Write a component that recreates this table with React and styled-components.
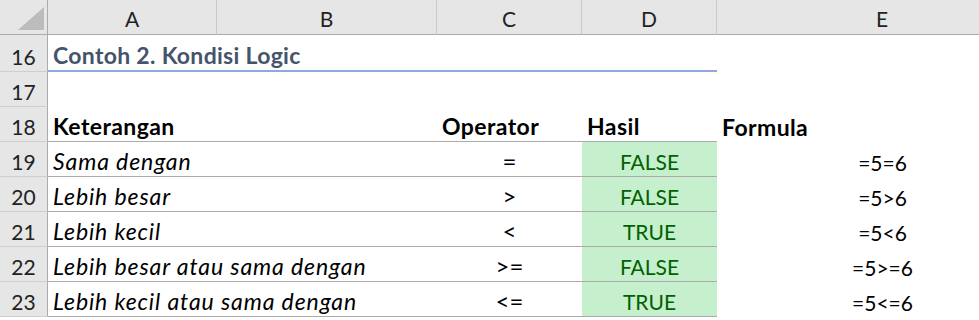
import React from "react";
import styled, { createGlobalStyle } from "styled-components";

const GlobalStyle = createGlobalStyle`
	html, body {
		margin: 0;
		padding: 0;
		background: #ffffff;
		overflow: hidden;
	}
	body {
		font-family: "Lato", "Liberation Sans", sans-serif;
	}
`;

const COLS = "48px 169px 220px 145px 135px 331px";

const Sheet = styled.div`
	display: flex;
	flex-direction: column;
	width: 1048px;
	font-size: 21px;
	color: #000000;
`;

const Row = styled.div`
	display: grid;
	grid-template-columns: ${COLS};
	height: ${({ $h }) => $h}px;
`;

const Corner = styled.div`
	box-sizing: border-box;
	background: #e6e6e6;
	border-right: 1px solid #ababab;
	border-bottom: 1px solid #ababab;
	svg {
		display: block;
	}
`;

const ColHead = styled.div`
	box-sizing: border-box;
	background: #e6e6e6;
	border-right: 1px solid #c9c9c9;
	border-bottom: 1px solid #ababab;
	display: flex;
	align-items: flex-end;
	justify-content: center;
	padding-bottom: 3px;
	color: #222222;
	line-height: 1.2;
`;

const RowHead = styled.div`
	box-sizing: border-box;
	background: #e6e6e6;
	border-right: 1px solid #ababab;
	border-bottom: 1px solid #cfcfcf;
	display: flex;
	align-items: flex-end;
	justify-content: center;
	padding-bottom: 2px;
	color: #222222;
	line-height: 1.2;
`;

const lines = {
	grid: "1px solid #ababab",
	heading: "2px solid #8ea9db",
	none: "0",
};

const Cell = styled.div`
	box-sizing: border-box;
	display: flex;
	align-items: flex-end;
	justify-content: ${({ $align }) => ($align === "center" ? "center" : "flex-start")};
	padding: 0 5px 2px;
	border-bottom: ${({ $line }) => lines[$line || "none"]};
	background: ${({ $good }) => ($good ? "#c6efce" : "transparent")};
	color: ${({ $good }) => ($good ? "#006100" : "inherit")};
	white-space: nowrap;
	line-height: 1.2;
	overflow: visible;
`;

const Words = styled.span`
	font-size: 23px;
	line-height: 1.1;
	font-weight: ${({ $bold }) => ($bold ? 700 : 400)};
	font-style: ${({ $italic }) => ($italic ? "italic" : "normal")};
	letter-spacing: ${({ $italic }) => ($italic ? "0.9px" : "0.4px")};
`;

const Title = styled(Words)`
	color: #44546a;
	font-weight: 700;
	letter-spacing: 0.3px;
`;

const Op = styled.span`
	font-size: 24px;
	line-height: 1.1;
`;

const letters = ["A", "B", "C", "D", "E"];

const data = [
	{ n: 19, ket: "Sama dengan", op: "=", hasil: "FALSE", f: "=5=6" },
	{ n: 20, ket: "Lebih besar", op: ">", hasil: "FALSE", f: "=5>6" },
	{ n: 21, ket: "Lebih kecil", op: "<", hasil: "TRUE", f: "=5<6" },
	{ n: 22, ket: "Lebih besar atau sama dengan", op: ">=", hasil: "FALSE", f: "=5>=6" },
	{ n: 23, ket: "Lebih kecil atau sama dengan", op: "<=", hasil: "TRUE", f: "=5<=6" },
];

const App = () => {
	return (
		<>
			<GlobalStyle />
			<Sheet>
				<Row $h={35}>
					<Corner>
						<svg width="47" height="34" viewBox="0 0 47 34">
							<polygon points="44,7 44,30 18,30" fill="#bcbcbc" />
						</svg>
					</Corner>
					{letters.map((l) => (
						<ColHead key={l}>{l}</ColHead>
					))}
				</Row>

				<Row $h={37}>
					<RowHead>16</RowHead>
					<Cell $line="heading">
						<Title>Contoh 2. Kondisi Logic</Title>
					</Cell>
					<Cell $line="heading" />
					<Cell $line="heading" />
					<Cell $line="heading" />
					<Cell />
				</Row>

				<Row $h={35}>
					<RowHead>17</RowHead>
					<Cell />
					<Cell />
					<Cell />
					<Cell />
					<Cell />
				</Row>

				<Row $h={35}>
					<RowHead>18</RowHead>
					<Cell $line="grid">
						<Words $bold>Keterangan</Words>
					</Cell>
					<Cell $line="grid" />
					<Cell $line="grid">
						<Words $bold>Operator</Words>
					</Cell>
					<Cell $line="grid">
						<Words $bold>Hasil</Words>
					</Cell>
					<Cell>
						<Words $bold>Formula</Words>
					</Cell>
				</Row>

				{data.map((r) => (
					<Row $h={35} key={r.n}>
						<RowHead>{r.n}</RowHead>
						<Cell $line="grid">
							<Words $italic>{r.ket}</Words>
						</Cell>
						<Cell $line="grid" />
						<Cell $line="grid" $align="center">
							<Op>{r.op}</Op>
						</Cell>
						<Cell $line="grid" $align="center" $good>{r.hasil}</Cell>
						<Cell $align="center">{r.f}</Cell>
					</Row>
				))}
			</Sheet>
		</>
	);
};

export default App;
